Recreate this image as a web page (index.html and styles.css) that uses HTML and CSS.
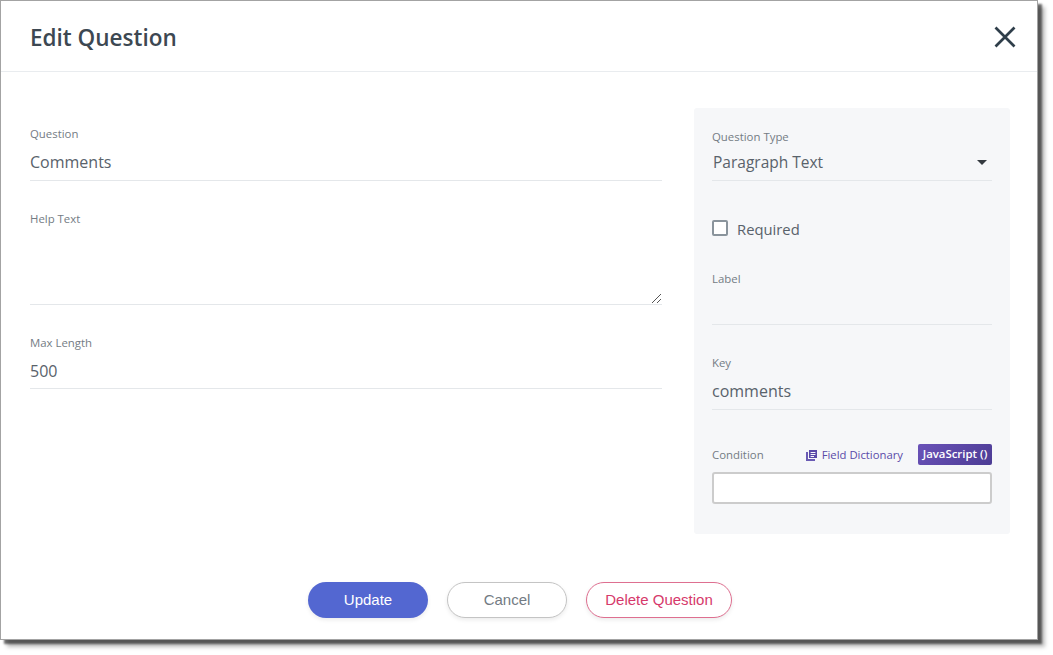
FILE: index.html
```html
<!DOCTYPE html>
<html lang="en">

<head>
    <meta charset="UTF-8">
    <title>Edit Question</title>
    <link rel="stylesheet" href="styles.css">
</head>

<body>
    <div class="modal">
        <header class="modal-header">
            <h1>Edit Question</h1>
            <svg class="close-icon" width="24" height="24" viewBox="0 0 24 24">
                <path d="M2.5 2.5 L21.5 21.5 M21.5 2.5 L2.5 21.5"></path>
            </svg>
        </header>

        <div class="modal-body">
            <div class="main-col">
                <div class="field">
                    <div class="field-label">Question</div>
                    <div class="field-value">Comments</div>
                </div>
                <div class="field help-field">
                    <div class="field-label">Help Text</div>
                    <div class="field-value textarea">
                        <svg class="resize-grip" width="11" height="11" viewBox="0 0 11 11">
                            <path d="M1 10 L10 1 M6 10 L10 6"></path>
                        </svg>
                    </div>
                </div>
                <div class="field length-field">
                    <div class="field-label">Max Length</div>
                    <div class="field-value">500</div>
                </div>
            </div>

            <div class="side-panel">
                <div class="field">
                    <div class="field-label">Question Type</div>
                    <div class="field-value select">
                        <span>Paragraph Text</span>
                        <span class="caret"></span>
                    </div>
                </div>

                <div class="check-row">
                    <span class="checkbox"></span>
                    <span>Required</span>
                </div>

                <div class="field label-field">
                    <div class="field-label">Label</div>
                    <div class="field-value"></div>
                </div>
                <div class="field key-field">
                    <div class="field-label">Key</div>
                    <div class="field-value">comments</div>
                </div>

                <div class="condition-head">
                    <span class="condition-label">Condition</span>
                    <span class="dict-link">
                        <svg width="12" height="12" viewBox="0 0 12 12">
                            <path class="dict-back" d="M1 3 V11 H9"></path>
                            <path class="dict-page" d="M3 1 H11 V9 H3 Z M4.6 3 H9.4 V4 H4.6 Z M4.6 5 H9.4 V6 H4.6 Z M4.6 7 H8 V8 H4.6 Z"></path>
                        </svg>
                        Field Dictionary
                    </span>
                    <span class="js-badge">JavaScript ()</span>
                </div>
                <div class="condition-input"></div>
            </div>
        </div>

        <footer class="modal-footer">
            <button class="btn btn-primary">Update</button>
            <button class="btn btn-default">Cancel</button>
            <button class="btn btn-danger">Delete Question</button>
        </footer>
    </div>
</body>

</html>
```

FILE: styles.css
```css
body {
    font-family: "Open Sans", "Noto Sans", sans-serif;
    margin: 0;
    padding: 0;
    min-height: 655px;
    background-color: #fff;
    color: #59626b;
}

.modal {
    box-sizing: border-box;
    width: 1038px;
    height: 640px;
    background: #fff;
    border: 1px solid #a3a3a3;
    box-shadow: 4px 4px 2px rgba(0, 0, 0, 0.55), 7px 7px 4px rgba(0, 0, 0, 0.25);
    display: flex;
    flex-direction: column;
}

.modal-header {
    box-sizing: border-box;
    height: 71px;
    flex: none;
    display: flex;
    justify-content: space-between;
    align-items: center;
    padding: 2px 20px 0 29px;
    border-bottom: 1px solid #e9ecef;
}

.modal-header h1 {
    margin: 0;
    font-size: 22.5px;
    font-weight: 600;
    color: #3d4852;
}

.close-icon {
    fill: none;
    stroke: #2f3e4a;
    stroke-width: 2.7;
}

.modal-body {
    display: grid;
    grid-template-columns: 632px 316px;
    column-gap: 32px;
    padding: 36px 0 0 29px;
    flex: 1;
    align-items: start;
}

.main-col {
    padding-top: 17px;
}

.field-label {
    font-size: 11.4px;
    line-height: 18px;
    color: #747c84;
}

.field-value {
    box-sizing: border-box;
    height: 38px;
    line-height: 38px;
    font-size: 16px;
    border-bottom: 1px solid #e4e7ea;
}

.help-field {
    margin-top: 29px;
}

.help-field .textarea {
    height: 77px;
    position: relative;
}

.resize-grip {
    position: absolute;
    right: 0;
    bottom: 0;
    fill: none;
    stroke: #555;
    stroke-width: 1;
}

.length-field {
    margin-top: 29px;
}

.length-field .field-value {
    height: 37px;
}

.side-panel {
    box-sizing: border-box;
    height: 426px;
    background: #f6f7f9;
    border-radius: 3px;
    padding: 20px 18px 0;
}

.side-panel .field-value {
    height: 35px;
    line-height: 31px;
}

.select {
    display: flex;
    justify-content: space-between;
    align-items: center;
    padding: 0 0 1px 1px;
    font-size: 15.5px;
}

.caret {
    width: 0;
    height: 0;
    margin-right: 5px;
    border-left: 5px solid transparent;
    border-right: 5px solid transparent;
    border-top: 5px solid #343a40;
}

.check-row {
    display: flex;
    align-items: center;
    gap: 9px;
    margin-top: 36px;
    height: 24px;
    font-size: 14.8px;
}

.checkbox {
    box-sizing: border-box;
    width: 16px;
    height: 16px;
    margin-bottom: 2px;
    background: #fff;
    border: 2px solid #8a949c;
    border-radius: 2px;
}

.label-field {
    margin-top: 29px;
}

.side-panel .label-field .field-value {
    height: 37px;
}

.key-field {
    margin-top: 29px;
}

.side-panel .key-field .field-value {
    height: 38px;
    line-height: 38px;
}

.condition-head {
    display: flex;
    align-items: center;
    margin-top: 34px;
    height: 21px;
}

.condition-label {
    font-size: 11.4px;
    color: #747c84;
    flex: 1;
}

.dict-link {
    display: flex;
    align-items: center;
    gap: 4px;
    font-size: 11.3px;
    color: #5a4aa8;
    margin-right: 15px;
}

.dict-back {
    fill: none;
    stroke: #6a5bb4;
    stroke-width: 2;
}

.dict-page {
    fill: #5a4aa8;
    fill-rule: evenodd;
}

.js-badge {
    box-sizing: border-box;
    width: 74px;
    height: 21px;
    line-height: 20px;
    text-align: center;
    font-size: 11.4px;
    font-weight: 600;
    color: #fff;
    border-radius: 2px;
    background: linear-gradient(135deg, #6a52b8, #4c3c94);
}

.condition-input {
    box-sizing: border-box;
    height: 32px;
    margin-top: 7px;
    background: #fff;
    border: 2px solid #cccccc;
    border-radius: 3px;
}

.modal-footer {
    display: flex;
    justify-content: center;
    gap: 19px;
    padding: 0 0 21px 2px;
}

.btn {
    box-sizing: border-box;
    height: 36px;
    padding: 0 0 1px;
    font-family: "Liberation Sans", Arial, sans-serif;
    font-size: 15px;
    border-radius: 18px;
    background: #fff;
    box-shadow: 0 2px 4px rgba(0, 0, 0, 0.08);
}

.btn-primary {
    width: 120px;
    background: #5367d1;
    color: #fff;
    border: none;
}

.btn-default {
    width: 120px;
    color: #737b83;
    border: 1px solid #c4c4c4;
}

.btn-danger {
    width: 146px;
    color: #d6396b;
    border: 1px solid #de6f90;
}
```
